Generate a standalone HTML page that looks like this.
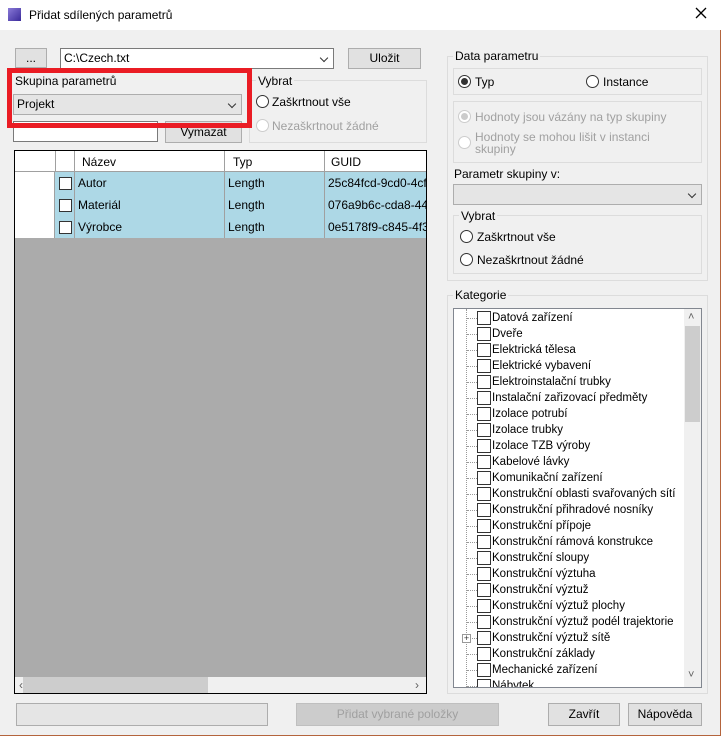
<!DOCTYPE html><html><head><meta charset="utf-8"><style>
*{box-sizing:border-box;margin:0;padding:0}
body{width:721px;height:736px;background:#f0f0f0;font-family:"Liberation Sans",sans-serif;font-size:12px;color:#000;position:relative;overflow:hidden}
.a{position:absolute}
.btn{position:absolute;background:#e1e1e1;border:1px solid #adadad;text-align:center;line-height:18px}
.combo{position:absolute;background:#fff;border:1px solid #7a7a7a;padding-left:3px;line-height:18px}
.chev{position:absolute;right:6px;top:6px;width:6px;height:6px;border-right:1px solid #333;border-bottom:1px solid #333;transform:rotate(45deg)}
.grp{position:absolute;border:1px solid #dcdcdc}
.lbl{position:absolute;background:#f0f0f0;padding:0 2px;line-height:14px}
.rad{position:absolute;width:13px;height:13px;border:1px solid #333;border-radius:50%;background:#fff}
.dis{color:#a0a0a0}
.cb{position:absolute;width:13px;height:13px;border:1px solid #333;background:#fff}
.row{position:absolute;left:0;width:412px;height:22px;border-bottom:1px solid #c8c8c8}
.cell{position:absolute;top:0;height:22px;line-height:23px;padding-left:3px;border-right:1px solid #a0a0a0;background:#add8e6;overflow:hidden;white-space:nowrap}
.it{position:absolute;left:0;height:16px;line-height:16px;white-space:nowrap;font-size:11.5px}
</style></head><body>
<div class="a" style="left:0;top:0;width:721px;height:30px;background:#fff"></div>
<div class="a" style="left:8px;top:8px;width:13px;height:13px;background:linear-gradient(135deg,#8a7ad8,#3a2a9a)"></div>
<div class="a" style="left:29px;top:8px;font-size:12px">Přidat sdílených parametrů</div>
<svg class="a" style="left:695px;top:7px" width="12" height="12"><path d="M1 1L11 11M11 1L1 11" stroke="#000" stroke-width="1.3"/></svg>
<div class="a" style="left:720px;top:30px;width:1px;height:706px;background:#b4643c"></div>
<div class="a" style="left:0;top:735px;width:721px;height:1px;background:#b4643c"></div>

<div class="btn" style="left:15px;top:48px;width:32px;height:20px">...</div>
<div class="combo" style="left:60px;top:48px;width:274px;height:21px">C:\Czech.txt<div class="chev"></div></div>
<div class="btn" style="left:348px;top:48px;width:73px;height:21px">Uložit</div>

<div class="grp" style="left:249px;top:80px;width:178px;height:63px"></div>
<div class="lbl" style="left:256px;top:74px">Vybrat</div>
<div class="rad" style="left:256px;top:95px"></div><div class="a" style="left:272px;top:95px">Zaškrtnout vše</div>
<div class="rad" style="left:256px;top:119px;border-color:#ccc"></div><div class="a dis" style="left:272px;top:119px">Nezaškrtnout žádné</div>
<div class="a" style="left:13px;top:121px;width:145px;height:21px;background:#fff;border:1px solid #7a7a7a"></div>
<div class="btn" style="left:165px;top:121px;width:77px;height:22px;line-height:20px">Vymazat</div>

<div class="a" style="left:7px;top:68px;width:245px;height:60px;border:5px solid #ea1c24"></div>
<div class="a" style="left:15px;top:74px">Skupina parametrů</div>
<div class="combo" style="left:13px;top:94px;width:229px;height:21px;background:#e5e5e5;border-color:#adadad">Projekt<div class="chev"></div></div>

<div class="a" style="left:14px;top:150px;width:413px;height:544px;border:1px solid #000;background:#ababab;overflow:hidden">
 <div class="a" style="left:0;top:0;width:412px;height:21px;background:#fff;border-bottom:1px solid #a0a0a0"></div>
 <div class="a" style="left:40px;top:0;width:1px;height:86px;background:#a0a0a0"></div>
 <div class="a" style="left:59px;top:0;width:1px;height:86px;background:#a0a0a0"></div>
 <div class="a" style="left:209px;top:0;width:1px;height:21px;background:#a0a0a0"></div>
 <div class="a" style="left:309px;top:0;width:1px;height:21px;background:#a0a0a0"></div>
 <div class="a" style="left:67px;top:4px">Název</div><div class="a" style="left:218px;top:4px">Typ</div><div class="a" style="left:316px;top:4px">GUID</div>
 <div class="row" style="top:21px"><div class="a" style="left:0;width:40px;height:22px;background:#fff;border-right:1px solid #a0a0a0"></div><div class="cell" style="left:40px;width:20px"></div><div class="cb" style="left:44px;top:5px"></div><div class="cell" style="left:60px;width:150px">Autor</div><div class="cell" style="left:210px;width:100px">Length</div><div class="cell" style="left:310px;width:110px">25c84fcd-9cd0-4cfa-</div></div>
 <div class="row" style="top:43px"><div class="a" style="left:0;width:40px;height:22px;background:#fff;border-right:1px solid #a0a0a0"></div><div class="cell" style="left:40px;width:20px"></div><div class="cb" style="left:44px;top:5px"></div><div class="cell" style="left:60px;width:150px">Materiál</div><div class="cell" style="left:210px;width:100px">Length</div><div class="cell" style="left:310px;width:110px">076a9b6c-cda8-44ea</div></div>
 <div class="row" style="top:65px"><div class="a" style="left:0;width:40px;height:22px;background:#fff;border-right:1px solid #a0a0a0"></div><div class="cell" style="left:40px;width:20px"></div><div class="cb" style="left:44px;top:5px"></div><div class="cell" style="left:60px;width:150px">Výrobce</div><div class="cell" style="left:210px;width:100px">Length</div><div class="cell" style="left:310px;width:110px">0e5178f9-c845-4f3c-</div></div>
 <div class="a" style="left:0;top:526px;width:412px;height:17px;background:#f0f0f0"></div>
 <div class="a" style="left:8px;top:526px;width:185px;height:16px;background:#cdcdcd"></div>
 <div class="a" style="left:4px;top:527px;color:#606060">‹</div><div class="a" style="left:400px;top:527px;color:#606060">›</div>
</div>

<div class="grp" style="left:447px;top:56px;width:261px;height:225px"></div>
<div class="lbl" style="left:453px;top:49px">Data parametru</div>
<div class="grp" style="left:453px;top:68px;width:249px;height:27px"></div>
<div class="rad" style="left:458px;top:75px"></div><div class="a" style="left:461px;top:78px;width:7px;height:7px;border-radius:50%;background:#333"></div>
<div class="a" style="left:475px;top:75px">Typ</div>
<div class="rad" style="left:586px;top:75px"></div><div class="a" style="left:603px;top:75px">Instance</div>
<div class="grp" style="left:453px;top:101px;width:249px;height:62px"></div>
<div class="rad" style="left:458px;top:110px;border-color:#ccc"></div><div class="a" style="left:461px;top:113px;width:7px;height:7px;border-radius:50%;background:#ccc"></div>
<div class="a dis" style="left:475px;top:110px">Hodnoty jsou vázány na typ skupiny</div>
<div class="rad" style="left:458px;top:136px;border-color:#ccc"></div><div class="a dis" style="left:475px;top:131px;line-height:12px">Hodnoty se mohou lišit v instanci<br>skupiny</div>
<div class="a" style="left:454px;top:167px">Parametr skupiny v:</div>
<div class="combo" style="left:453px;top:184px;width:249px;height:21px;background:#e5e5e5;border-color:#adadad"><div class="chev"></div></div>
<div class="grp" style="left:453px;top:215px;width:249px;height:59px"></div>
<div class="lbl" style="left:459px;top:209px">Vybrat</div>
<div class="rad" style="left:460px;top:230px"></div><div class="a" style="left:477px;top:230px">Zaškrtnout vše</div>
<div class="rad" style="left:460px;top:253px"></div><div class="a" style="left:477px;top:253px">Nezaškrtnout žádné</div>

<div class="grp" style="left:447px;top:295px;width:261px;height:399px"></div>
<div class="lbl" style="left:453px;top:288px">Kategorie</div>
<div class="a" style="left:453px;top:308px;width:249px;height:380px;background:#fff;border:1px solid #828790;overflow:hidden">
 <div class="a" style="left:12px;top:0;width:0;height:380px;border-left:1px dotted #999"></div>
 <div id="L"></div>
 <div class="a" style="left:230px;top:0;width:17px;height:378px;background:#f0f0f0"></div>
 <div class="a" style="left:231px;top:17px;width:15px;height:96px;background:#cdcdcd"></div>
 <div class="a" style="left:234px;top:2px;color:#606060;font-size:11px">˄</div>
 <div class="a" style="left:234px;top:360px;color:#606060;font-size:11px">˅</div>
</div>

<div class="a" style="left:16px;top:703px;width:252px;height:23px;background:#e5e5e5;border:1px solid #adadad"></div>
<div class="btn dis" style="left:296px;top:703px;width:203px;height:23px;background:#ccc;border-color:#bfbfbf;line-height:21px">Přidat vybrané položky</div>
<div class="btn" style="left:548px;top:703px;width:72px;height:23px;line-height:21px">Zavřít</div>
<div class="btn" style="left:628px;top:703px;width:74px;height:23px;line-height:21px">Nápověda</div>
<script>
var n=["Datová zařízení","Dveře","Elektrická tělesa","Elektrické vybavení","Elektroinstalační trubky","Instalační zařizovací předměty","Izolace potrubí","Izolace trubky","Izolace TZB výroby","Kabelové lávky","Komunikační zařízení","Konstrukční oblasti svařovaných sítí","Konstrukční přihradové nosníky","Konstrukční přípoje","Konstrukční rámová konstrukce","Konstrukční sloupy","Konstrukční výztuha","Konstrukční výztuž","Konstrukční výztuž plochy","Konstrukční výztuž podél trajektorie","Konstrukční výztuž sítě","Konstrukční základy","Mechanické zařízení","Nábytek"],h="";
n.forEach(function(t,i){var y=1+i*16;h+='<div class="a" style="left:13px;top:'+(y+8)+'px;width:10px;border-top:1px dotted #999"></div><div class="cb" style="left:23px;top:'+(y+1)+'px;width:14px;height:14px"></div><div class="it" style="left:38px;top:'+y+'px">'+t+'</div>';if(i==20)h+='<div class="a" style="left:8px;top:'+(y+4)+'px;width:9px;height:9px;border:1px solid #999;background:#fff;font-size:9px;line-height:7px;text-align:center;color:#333">+</div>';});
document.getElementById("L").innerHTML=h;
</script>
</body></html>
